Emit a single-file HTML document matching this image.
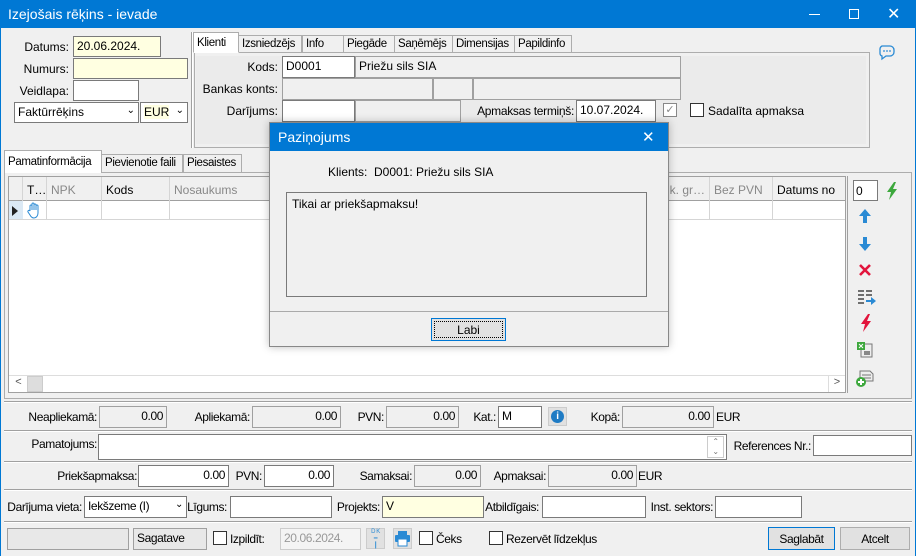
<!DOCTYPE html>
<html><head><meta charset="utf-8">
<style>
*{box-sizing:border-box;margin:0;padding:0}
body{width:916px;height:556px;position:relative;background:#f0f0f0;font-family:"Liberation Sans",sans-serif;font-size:12px;color:#000;overflow:hidden}
.a{position:absolute}
.l{position:absolute;text-align:right;white-space:nowrap}
.i{position:absolute;border:1px solid #7a7a7a;background:#fff;padding:2px 3px;white-space:nowrap;overflow:hidden}
.g{background:#f0f0f0;border-color:#a0a0a0}
.y{background:#ffffe1}
.n{text-align:right}
.tab{position:absolute;border:1px solid #adadad;border-bottom:none;background:#f0f0f0;padding:2px 3px;white-space:nowrap;font-size:11.5px;letter-spacing:-0.35px;overflow:hidden}
.sep{position:absolute;left:4px;right:4px;height:2px;border-top:1px solid #a0a0a0;border-bottom:1px solid #fff}
.cb{position:absolute;width:14px;height:14px;border:1px solid #333;background:#fff}
.btn{position:absolute;border:1px solid #adadad;background:#e1e1e1;text-align:center}
.hd{position:absolute;top:0;height:24px;border-right:1px solid #d5d5d5;padding:6px 4px;white-space:nowrap;overflow:hidden}
.bt{font-size:12px;letter-spacing:-0.4px}
</style></head><body>
<!-- title -->
<div class="a" style="left:0;top:0;width:916px;height:28px;background:#0078d4"></div>
<div class="a" style="left:8px;top:6px;color:#fff;font-size:14px">Izejošais rēķins - ievade</div>
<div class="a" style="left:809px;top:14px;width:11px;height:1px;background:#fff"></div>
<div class="a" style="left:849px;top:9px;width:10px;height:10px;border:1px solid #fff"></div>
<div class="a" style="left:887px;top:4px;color:#fff;font-size:16px">✕</div>
<div class="a" style="left:0;top:28px;width:1px;height:528px;background:#0078d4"></div>
<div class="a" style="left:915px;top:28px;width:1px;height:528px;background:#0078d4"></div>

<!-- left top fields -->
<div class="l" style="right:847px;top:40px">Datums:</div>
<div class="i y" style="left:73px;top:36px;width:88px;height:21px">20.06.2024.</div>
<div class="l" style="right:847px;top:62px">Numurs:</div>
<div class="i y" style="left:73px;top:58px;width:115px;height:21px"></div>
<div class="l" style="right:847px;top:84px">Veidlapa:</div>
<div class="i" style="left:73px;top:80px;width:66px;height:21px"></div>
<div class="i" style="left:14px;top:102px;width:125px;height:21px">Faktūrrēķins<span class="a" style="right:3px;top:2px;font-size:10px">⌄</span></div>
<div class="i" style="left:140px;top:102px;width:48px;height:21px"><span style="background:#ffffe1">EUR</span><span class="a" style="right:3px;top:2px;font-size:10px">⌄</span></div>

<!-- klienti group -->
<div class="a" style="left:191px;top:32px;width:2px;height:116px;border-left:1px solid #a0a0a0;border-right:1px solid #fff"></div>
<div class="a" style="left:194px;top:52px;width:676px;height:96px;border:1px solid #adadad;background:#f0f0f0"></div>
<div class="a" style="left:196px;top:56px;width:670px;height:88px;background:#ebebeb"></div>
<div class="tab" style="left:193px;top:32px;width:46px;height:21px;background:#fff;border-bottom:1px solid #fff;padding-top:4px">Klienti</div>
<div class="tab" style="left:238px;top:35px;width:64px;height:17px">Izsniedzējs</div>
<div class="tab" style="left:302px;top:35px;width:42px;height:17px">Info</div>
<div class="tab" style="left:343px;top:35px;width:52px;height:17px">Piegāde</div>
<div class="tab" style="left:394px;top:35px;width:59px;height:17px">Saņēmējs</div>
<div class="tab" style="left:452px;top:35px;width:63px;height:17px">Dimensijas</div>
<div class="tab" style="left:514px;top:35px;width:58px;height:17px">Papildinfo</div>
<div class="l" style="right:638px;top:60px">Kods:</div>
<div class="i" style="left:282px;top:56px;width:73px;height:22px">D0001</div>
<div class="i g" style="left:355px;top:56px;width:326px;height:22px">Priežu sils SIA</div>
<div class="l" style="right:638px;top:82px">Bankas konts:</div>
<div class="i g" style="left:282px;top:78px;width:151px;height:22px"></div>
<div class="i g" style="left:433px;top:78px;width:40px;height:22px"></div>
<div class="i g" style="left:473px;top:78px;width:208px;height:22px"></div>
<div class="l" style="right:638px;top:104px">Darījums:</div>
<div class="i" style="left:282px;top:100px;width:73px;height:22px"></div>
<div class="i g" style="left:355px;top:100px;width:106px;height:22px"></div>
<div class="l" style="right:342px;top:104px;letter-spacing:-0.3px">Apmaksas termiņš:</div>
<div class="i" style="left:576px;top:100px;width:80px;height:22px">10.07.2024.</div>
<div class="cb" style="left:663px;top:103px;border-color:#888;color:#888;font-size:11px;line-height:12px;text-align:center">✓</div>
<div class="cb" style="left:690px;top:103px"></div>
<div class="a" style="left:708px;top:104px">Sadalīta apmaksa</div>
<svg class="a" style="left:878px;top:43px" width="18" height="18" viewBox="0 0 18 18"><path d="M4 3h8a4 4 0 0 1 4 4v2a4 4 0 0 1-4 4H8l-4 3v-3a3 3 0 0 1-2-3V7a4 4 0 0 1 2-4z" fill="none" stroke="#2a8ad4" stroke-width="1.3"/><circle cx="6" cy="8" r="0.9" fill="#2a8ad4"/><circle cx="9" cy="8" r="0.9" fill="#2a8ad4"/><circle cx="12" cy="8" r="0.9" fill="#2a8ad4"/></svg>

<!-- lower tabs -->
<div class="a" style="left:4px;top:172px;width:908px;height:227px;border:1px solid #adadad;background:#f0f0f0"></div>
<div class="tab" style="left:4px;top:150px;width:98px;height:23px;background:#fff;padding-top:5px">Pamatinformācija</div>
<div class="tab" style="left:101px;top:154px;width:82px;height:18px">Pievienotie faili</div>
<div class="tab" style="left:183px;top:154px;width:59px;height:18px">Piesaistes</div>
<!-- grid -->
<div class="a" style="left:8px;top:176px;width:838px;height:217px;border:1px solid #a0a0a0;background:#fff;overflow:hidden">
 <div class="a" style="left:0;top:0;width:836px;height:24px;background:#f0f0f0;border-bottom:1px solid #a0a0a0"></div>
 <div class="hd" style="left:0;width:14px"></div>
 <div class="hd" style="left:14px;width:24px">T…</div>
 <div class="hd" style="left:38px;width:55px;color:#888">NPK</div>
 <div class="hd" style="left:93px;width:68px">Kods</div>
 <div class="hd" style="left:161px;width:140px;color:#888">Nosaukums</div>
 <div class="hd" style="left:640px;width:61px;color:#888;text-align:right">k. gr…</div>
 <div class="hd" style="left:701px;width:63px;color:#888">Bez PVN</div>
 <div class="hd" style="left:764px;width:73px">Datums no</div>
 <div class="a" style="left:0;top:24px;width:14px;height:18px;background:#dbe9f5"></div>
 <div class="a" style="left:3px;top:29px;width:0;height:0;border-left:6px solid #222;border-top:5px solid transparent;border-bottom:5px solid transparent"></div>
 <div class="a" style="left:0;top:42px;width:836px;height:1px;background:#d5d5d5"></div>
 <div class="a" style="left:37px;top:24px;width:1px;height:18px;background:#d5d5d5"></div>
 <div class="a" style="left:92px;top:24px;width:1px;height:18px;background:#d5d5d5"></div>
 <div class="a" style="left:160px;top:24px;width:1px;height:18px;background:#d5d5d5"></div>
 <div class="a" style="left:700px;top:24px;width:1px;height:18px;background:#d5d5d5"></div>
 <div class="a" style="left:763px;top:24px;width:1px;height:18px;background:#d5d5d5"></div>
 <svg class="a" style="left:18px;top:25px" width="14" height="17"><path d="M3 9V4a1 1 0 0 1 2 0v4V2a1 1 0 0 1 2 0v6V3a1 1 0 0 1 2 0v5V4a1 1 0 0 1 2 0v7c0 3-2 5-4 5H7c-2 0-3-1-4-3L1 10a1 1 0 0 1 2-1z" fill="none" stroke="#2a8ad4" stroke-width="1"/></svg>
 <div class="a" style="left:0;top:198px;width:836px;height:17px;border-top:1px solid #ddd;background:#fff"></div>
 <div class="a" style="left:1px;top:199px;width:17px;height:16px;text-align:center;font-size:11px;color:#555">&lt;</div>
 <div class="a" style="left:18px;top:199px;width:16px;height:16px;background:#ddd;border:1px solid #ccc"></div>
 <div class="a" style="left:819px;top:199px;width:17px;height:16px;text-align:center;font-size:11px;color:#555;border-left:1px solid #ddd">&gt;</div>
</div>
<!-- right toolbar -->
<div class="a" style="left:847px;top:176px;width:63px;height:217px;border-left:1px solid #a0a0a0"></div>
<div class="i" style="left:853px;top:180px;width:25px;height:21px;padding:3px 2px">0</div>
<svg class="a" style="left:884px;top:182px" width="16" height="18"><path d="M10 0L3 10h4l-2 8 8-11H9l3-7z" fill="#3da83d"/></svg>
<svg class="a" style="left:858px;top:208px" width="14" height="16"><path d="M7 1L1 8h4v7h4V8h4z" fill="#2a8ad4"/></svg>
<svg class="a" style="left:858px;top:236px" width="14" height="16"><path d="M7 15L1 8h4V1h4v7h4z" fill="#2a8ad4"/></svg>
<svg class="a" style="left:858px;top:263px" width="14" height="14"><path d="M2 2L12 12M12 2L2 12" stroke="#e2143c" stroke-width="2.6"/></svg>
<svg class="a" style="left:857px;top:289px" width="20" height="16"><path d="M1 2h6M1 6h6M1 10h6M1 14h6M9 2h6M9 6h6" stroke="#444" stroke-width="1.4"/><path d="M9 11h5V8l5 4-5 4v-3H9z" fill="#2a8ad4"/></svg>
<svg class="a" style="left:858px;top:314px" width="14" height="18"><path d="M10 0L3 10h4l-2 8 8-11H9l3-7z" fill="#e2143c"/></svg>
<svg class="a" style="left:856px;top:341px" width="18" height="18"><rect x="5" y="3" width="11" height="13" fill="#eee" stroke="#777"/><rect x="1" y="1" width="8" height="8" fill="#3da83d"/><path d="M3 3l4 4M7 3l-4 4" stroke="#fff"/><rect x="8" y="10" width="6" height="4" fill="#888"/></svg>
<svg class="a" style="left:855px;top:368px" width="20" height="20"><path d="M5 3h10l3 3v7H5z" fill="#eee" stroke="#777"/><path d="M7 7h9M7 10h9" stroke="#777"/><circle cx="6" cy="14" r="5" fill="#3da83d"/><path d="M6 11v6M3 14h6" stroke="#fff" stroke-width="2"/></svg>

<!-- dialog -->
<div class="a" style="left:269px;top:122px;width:400px;height:225px;border:1px solid #888;background:#f0f0f0;box-shadow:0 0 8px rgba(0,0,0,.25)"></div>
<div class="a" style="left:270px;top:123px;width:398px;height:28px;background:#0078d4"></div>
<div class="a" style="left:278px;top:129px;color:#fff;font-size:14px">Paziņojums</div>
<div class="a" style="left:642px;top:128px;color:#fff;font-size:15px">✕</div>
<div class="a" style="left:328px;top:165px">Klients:&nbsp; D0001: Priežu sils SIA</div>
<div class="a" style="left:286px;top:192px;width:361px;height:105px;border:1px solid #7a7a7a;padding:4px 5px">Tikai ar priekšapmaksu!</div>
<div class="a" style="left:270px;top:311px;width:398px;height:1px;background:#aaa"></div>
<div class="a" style="left:431px;top:318px;width:75px;height:23px;border:1px solid #0078d4;background:#e1e1e1"><div style="margin:2px;border:1px dotted #000;height:17px;text-align:center;line-height:16px">Labi</div></div>

<!-- bottom -->
<div class="bt">
<div class="sep" style="top:401px"></div>
<div class="l" style="right:819px;top:410px">Neapliekamā:</div>
<div class="i g n" style="left:99px;top:406px;width:68px;height:22px">0.00</div>
<div class="l" style="right:666px;top:410px">Apliekamā:</div>
<div class="i g n" style="left:252px;top:406px;width:89px;height:22px">0.00</div>
<div class="l" style="right:532px;top:410px">PVN:</div>
<div class="i g n" style="left:386px;top:406px;width:73px;height:22px">0.00</div>
<div class="l" style="right:420px;top:410px">Kat.:</div>
<div class="i" style="left:498px;top:406px;width:44px;height:22px">M</div>
<div class="a" style="left:548px;top:407px;width:19px;height:19px;background:#e1e1e1;border:1px solid #ccc"></div>
<div class="a" style="left:551px;top:410px;width:13px;height:13px;border-radius:50%;background:#1e7bc4;color:#fff;font-size:10px;font-weight:bold;text-align:center;line-height:13px">i</div>
<div class="l" style="right:296px;top:410px">Kopā:</div>
<div class="i g n" style="left:622px;top:406px;width:92px;height:22px">0.00</div>
<div class="a" style="left:716px;top:410px">EUR</div>
<div class="sep" style="top:430px"></div>
<div class="l" style="right:819px;top:437px">Pamatojums:</div>
<div class="i" style="left:98px;top:434px;width:629px;height:26px"></div>
<div class="a" style="left:707px;top:436px;width:17px;height:22px;border:1px solid #ccc;font-size:8px;color:#777;text-align:center;line-height:10px">⌃<br>⌄</div>
<div class="l" style="right:105px;top:439px">References Nr.:</div>
<div class="i" style="left:813px;top:435px;width:99px;height:21px"></div>
<div class="sep" style="top:461px"></div>
<div class="l" style="right:779px;top:469px">Priekšapmaksa:</div>
<div class="i n" style="left:138px;top:465px;width:91px;height:22px">0.00</div>
<div class="l" style="right:654px;top:469px">PVN:</div>
<div class="i n" style="left:264px;top:465px;width:70px;height:22px">0.00</div>
<div class="l" style="right:504px;top:469px">Samaksai:</div>
<div class="i g n" style="left:414px;top:465px;width:67px;height:22px">0.00</div>
<div class="l" style="right:370px;top:469px">Apmaksai:</div>
<div class="i g n" style="left:548px;top:465px;width:89px;height:22px">0.00</div>
<div class="a" style="left:638px;top:469px">EUR</div>
<div class="sep" style="top:489px"></div>
<div class="l" style="right:834px;top:500px">Darījuma vieta:</div>
<div class="i" style="left:84px;top:496px;width:103px;height:22px">Iekšzeme (I)<span class="a" style="right:3px;top:2px;font-size:10px">⌄</span></div>
<div class="l" style="right:689px;top:500px">Līgums:</div>
<div class="i" style="left:230px;top:496px;width:102px;height:22px"></div>
<div class="l" style="right:536px;top:500px">Projekts:</div>
<div class="i y" style="left:382px;top:496px;width:102px;height:22px">V</div>
<div class="l" style="right:377px;top:500px">Atbildīgais:</div>
<div class="i" style="left:542px;top:496px;width:104px;height:22px"></div>
<div class="l" style="right:203px;top:500px">Inst. sektors:</div>
<div class="i" style="left:715px;top:496px;width:87px;height:22px"></div>
<div class="sep" style="top:521px"></div>
<div class="i g" style="left:7px;top:528px;width:122px;height:22px;background:#e8e8e8"></div>
<div class="i g" style="left:133px;top:528px;width:74px;height:22px;background:#e8e8e8;color:#000">Sagatave</div>
<div class="cb" style="left:213px;top:531px"></div>
<div class="a" style="left:230px;top:532px">Izpildīt:</div>
<div class="i g" style="left:280px;top:528px;width:81px;height:22px;color:#999;background:#f4f4f4;border-color:#ccc">20.06.2024.</div>
<div class="a" style="left:366px;top:528px;width:19px;height:21px;background:#e1e1e1;border:1px solid #ccc;font-size:6px;color:#2a8ad4;text-align:center;line-height:7px">D K<br>━<br>┃</div>
<div class="a" style="left:393px;top:528px;width:19px;height:21px;background:#e1e1e1;border:1px solid #ccc"></div>
<svg class="a" style="left:394px;top:530px" width="17" height="17"><rect x="4" y="1" width="9" height="4" fill="#2a8ad4"/><rect x="1" y="5" width="15" height="7" rx="1" fill="#2a8ad4"/><rect x="4" y="9" width="9" height="7" fill="#fff" stroke="#2a8ad4"/></svg>
<div class="cb" style="left:419px;top:531px"></div>
<div class="a" style="left:436px;top:532px">Čeks</div>
<div class="cb" style="left:489px;top:531px"></div>
<div class="a" style="left:506px;top:532px">Rezervēt līdzekļus</div>
<div class="btn" style="left:768px;top:527px;width:67px;height:23px;border-color:#0078d4;padding-top:4px">Saglabāt</div>
<div class="btn" style="left:840px;top:527px;width:70px;height:23px;padding-top:4px">Atcelt</div>
</div>
</body></html>
